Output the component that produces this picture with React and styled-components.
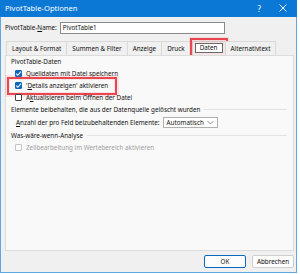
import styled, { createGlobalStyle } from "styled-components"

const Global = createGlobalStyle`
    body {
        margin: 0;
        background: #ffffff;
        font-family: "Noto Sans", "Open Sans", sans-serif;
    }
`

const tabs = ["Layout & Format", "Summen & Filter", "Anzeige", "Druck", "Daten", "Alternativtext"]

function Check({ checked, disabled }) {
    return (
        <SCBox $checked={checked} $disabled={disabled}>
            {checked && (
                <svg width="7" height="7" viewBox="0 0 8 8">
                    <path d="M1.3 4.2 L3.2 6 L6.8 1.8" fill="none" stroke="#fff" strokeWidth="1.2" />
                </svg>
            )}
        </SCBox>
    )
}

export default function App() {
    return (
        <>
            <Global />
            <SCWindow>
                <SCTitleBar>
                    <SCTitle>PivotTable-Optionen</SCTitle>
                    <SCTitleButtons>
                        <span>?</span>
                        <svg width="8" height="8" viewBox="0 0 8 8">
                            <path d="M0.5 0.5 L7.5 7.5 M7.5 0.5 L0.5 7.5" stroke="#fff" strokeWidth="0.9" />
                        </svg>
                    </SCTitleButtons>
                </SCTitleBar>

                <SCBody>
                    <SCNameRow>
                        <SCLabel>PivotTable-<u>N</u>ame:</SCLabel>
                        <SCInput>PivotTable1</SCInput>
                    </SCNameRow>

                    <SCTabs>
                        {tabs.map((t) => (
                            <SCTab key={t} $active={t === "Daten"}>
                                {t === "Daten" ? <SCFocus>{t}</SCFocus> : t}
                            </SCTab>
                        ))}
                    </SCTabs>

                    <SCPanel>
                        <SCGroupTitle>PivotTable-Daten</SCGroupTitle>
                        <SCCheckRow>
                            <Check checked />
                            <span>Quelldaten mit Datei <u>s</u>peichern</span>
                        </SCCheckRow>
                        <SCCheckRow $marked>
                            <Check checked />
                            <span>'<u>D</u>etails anzeigen' aktivieren</span>
                        </SCCheckRow>
                        <SCCheckRow>
                            <Check />
                            <span>A<u>k</u>tualisieren beim Öffnen der Datei</span>
                        </SCCheckRow>

                        <SCGroupTitle $line>
                            <span>Elemente beibehalten, die aus der Datenquelle gelöscht wurden</span>
                        </SCGroupTitle>
                        <SCSelectRow>
                            <span><u>A</u>nzahl der pro Feld beizubehaltenden Elemente:</span>
                            <SCSelect>
                                <span>Automatisch</span>
                                <svg width="7" height="5" viewBox="0 0 7 5">
                                    <path d="M0.5 1 L3.5 4 L6.5 1" fill="none" stroke="#777" strokeWidth="0.8" />
                                </svg>
                            </SCSelect>
                        </SCSelectRow>

                        <SCGroupTitle $line>
                            <span>Was-wäre-wenn-Analyse</span>
                        </SCGroupTitle>
                        <SCCheckRow $disabled>
                            <Check disabled />
                            <span>Zellbearbeitung im Wertebereich aktivieren</span>
                        </SCCheckRow>
                    </SCPanel>
                </SCBody>

                <SCFooter>
                    <SCButton $default>OK</SCButton>
                    <SCButton>Abbrechen</SCButton>
                </SCFooter>
            </SCWindow>
        </>
    )
}

const SCWindow = styled.div`
    width: 297px;
    height: 273px;
    box-sizing: border-box;

    background-color: #f0f0f0;
    border: 1px solid #5fa7e3;
    border-top: none;

    display: flex;
    flex-direction: column;

    font-size: 6.3px;
    color: #111;
`

const SCTitleBar = styled.div`
    height: 17px;
    margin: 0 -1px;
    padding: 0 10px 0 5px;

    background-color: #0b78d6;
    color: #fff;

    display: flex;
    justify-content: space-between;
    align-items: center;
`

const SCTitle = styled.span`
    font-size: 7.6px;
`

const SCTitleButtons = styled.div`
    display: flex;
    align-items: center;
    gap: 18px;

    font-size: 8px;
`

const SCBody = styled.div`
    flex: 1;
    padding: 5px 2px 0 4px;

    display: flex;
    flex-direction: column;
`

const SCNameRow = styled.div`
    display: flex;
    align-items: center;
    gap: 3px;
`

const SCLabel = styled.span`
    white-space: nowrap;
`

const SCInput = styled.div`
    width: 159px;
    height: 10px;
    padding: 0 2px;

    background-color: #fff;
    border: 1px solid #8a8a8a;

    display: flex;
    align-items: center;
`

const SCTabs = styled.div`
    margin-top: 7px;
    padding-left: 1px;

    display: flex;
    align-items: flex-end;
`

const SCTab = styled.div`
    height: 13px;
    padding: 0 ${(p) => (p.$active ? "2px" : "5px")};
    margin-left: ${(p) => (p.$active ? "2px" : "0")};

    background-color: ${(p) => (p.$active ? "#f9f9f9" : "#f0f0f0")};
    border: 1px solid #d9d9d9;
    border-bottom: none;
    margin-right: -1px;

    display: flex;
    align-items: center;
    white-space: nowrap;
`

const SCFocus = styled.span`
    padding: 0 4px;
    border: 1px solid #6a6a6a;
    background: #fff;
    outline: 2px solid #ea4650;
    outline-offset: 3px;
    box-shadow: 0 0 0 6px rgba(234, 70, 80, 0.12);
    line-height: 8px;
`

const SCPanel = styled.div`
    height: 196px;
    box-sizing: border-box;
    padding: 0 6px 0 5px;

    background-color: #f9f9f9;
    border: 1px solid #dcdcdc;

    display: flex;
    flex-direction: column;
`

const SCGroupTitle = styled.div`
    height: 12px;

    display: flex;
    align-items: center;
    gap: 4px;

    white-space: nowrap;

    &::after {
        content: "";
        flex: 1;
        height: 1px;
        background-color: ${(p) => (p.$line ? "#e3e3e3" : "transparent")};
    }
`

const SCCheckRow = styled.div`
    height: 12px;
    align-self: flex-start;
    margin-left: ${(p) => (p.$marked ? "-1px" : "4px")};
    padding: ${(p) => (p.$marked ? "0 6px 0 5px" : "0")};

    display: flex;
    align-items: center;
    gap: 4px;

    white-space: nowrap;
    color: ${(p) => (p.$disabled ? "#a0a0a0" : "inherit")};

    outline: ${(p) => (p.$marked ? "2px solid #ea4650" : "none")};
    outline-offset: 1px;
    box-shadow: ${(p) => (p.$marked ? "0 0 0 5px rgba(234, 70, 80, 0.12)" : "none")};
`

const SCBox = styled.span`
    width: 7px;
    height: 7px;
    box-sizing: border-box;
    flex-shrink: 0;

    background-color: ${(p) => (p.$checked ? "#0a67c0" : "#fff")};
    border: 1px solid ${(p) => (p.$checked ? "#0a67c0" : p.$disabled ? "#c4c4c4" : "#444")};
    border-radius: 1px;

    display: flex;
    align-items: center;
    justify-content: center;

    svg {
        flex-shrink: 0;
    }
`

const SCSelectRow = styled.div`
    height: 14px;
    margin-left: 5px;

    display: flex;
    align-items: center;
    gap: 3px;

    white-space: nowrap;
`

const SCSelect = styled.div`
    width: 47px;
    height: 9px;
    padding: 0 3px;

    background-color: #fff;
    border: 1px solid #b0b0b0;

    display: flex;
    justify-content: space-between;
    align-items: center;
`

const SCFooter = styled.div`
    height: 22px;
    padding-right: 2px;

    display: flex;
    justify-content: flex-end;
    align-items: center;
    gap: 6px;
`

const SCButton = styled.div`
    width: 40px;
    height: 11px;

    background-color: #fdfdfd;
    border: 1px solid ${(p) => (p.$default ? "#0a67c0" : "#cfcfcf")};
    border-radius: 2px;

    display: flex;
    justify-content: center;
    align-items: center;
`
